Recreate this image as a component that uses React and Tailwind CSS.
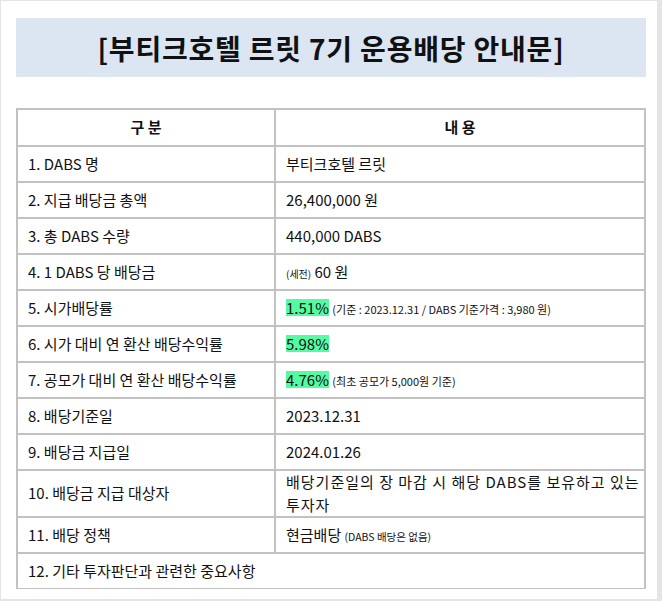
import React from 'react';

const hl = 'inline-block bg-[#55fba3] leading-[17px]';

const rows = [
  { label: '1. DABS 명', value: <span>부티크호텔 르릿</span> },
  { label: '2. 지급 배당금 총액', value: <span>26,400,000 원</span> },
  { label: '3. 총 DABS 수량', value: <span>440,000 DABS</span> },
  {
    label: '4. 1 DABS 당 배당금',
    value: (
      <span>
        <span className="text-[10px]">(세전)</span> 60 원
      </span>
    ),
  },
  {
    label: '5. 시가배당률',
    value: (
      <span>
        <span className={hl}>1.51%</span>{' '}
        <span className="text-[11px]">(기준 : 2023.12.31 / DABS 기준가격 : 3,980 원)</span>
      </span>
    ),
  },
  {
    label: '6. 시가 대비 연 환산 배당수익률',
    value: <span className={hl}>5.98%</span>,
  },
  {
    label: '7. 공모가 대비 연 환산 배당수익률',
    value: (
      <span>
        <span className={hl}>4.76%</span>{' '}
        <span className="text-[11px]">(최초 공모가 5,000원 기준)</span>
      </span>
    ),
  },
  { label: '8. 배당기준일', value: <span>2023.12.31</span> },
  { label: '9. 배당금 지급일', value: <span>2024.01.26</span> },
  {
    label: '10. 배당금 지급 대상자',
    tall: true,
    value: (
      <span className="leading-[18px] tracking-[1px]">
        배당기준일의 장 마감 시 해당 DABS를 보유하고 있는
        <br />
        투자자
      </span>
    ),
  },
  {
    label: '11. 배당 정책',
    value: (
      <span>
        현금배당 <span className="text-[10.5px]">(DABS 배당은 없음)</span>
      </span>
    ),
  },
];

const cell = 'border-2 border-[#c2c2c2] px-[10px] align-middle';

export default function App() {
  return (
    <div
      className="w-[662px] h-[601px] bg-[#e4e4e4] pl-px pt-px pr-[5px] pb-[2px] text-[#111]"
      style={{ fontFamily: '"Noto Sans CJK KR", "Noto Sans", sans-serif' }}
    >
      <div className="h-full bg-white">
        <div className="h-[588px] overflow-hidden pl-[15px] pr-[10px] pt-[17px]">
          {/* Title */}
          <div className="h-[59px] w-[630px] bg-[#dce6f3] flex items-center justify-center">
            <h1 className="text-[28px] font-bold tracking-[0.8px]">
              [부티크호텔 르릿 7기 운용배당 안내문]
            </h1>
          </div>

          {/* Table */}
          <table className="mt-[31px] w-[630px] border-collapse text-[15px] table-fixed">
            <colgroup>
              <col className="w-[258px]" />
              <col />
            </colgroup>
            <thead>
              <tr className="h-[37px]">
                <th className={`${cell} text-center font-bold`}>구 분</th>
                <th className={`${cell} text-center font-bold`}>내 용</th>
              </tr>
            </thead>
            <tbody>
              {rows.map((r) => (
                <tr key={r.label} className={r.tall ? 'h-[45px]' : 'h-[36px]'}>
                  <td className={cell}>{r.label}</td>
                  <td className={`${cell} whitespace-nowrap`}>{r.value}</td>
                </tr>
              ))}
              <tr className="h-[36px]">
                <td className={cell} colSpan={2}>
                  12. 기타 투자판단과 관련한 중요사항
                </td>
              </tr>
              <tr className="h-[36px]">
                <td className={cell} colSpan={2}></td>
              </tr>
            </tbody>
          </table>
        </div>
      </div>
    </div>
  );
}
